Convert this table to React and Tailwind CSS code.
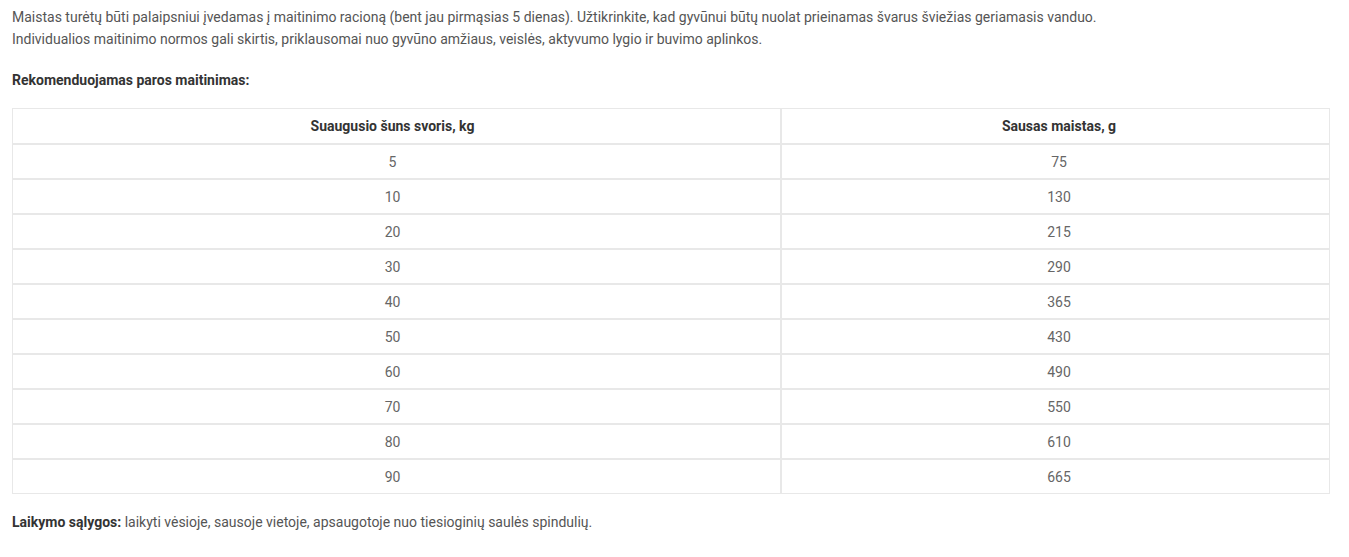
const rows = [
  ["5", "75"],
  ["10", "130"],
  ["20", "215"],
  ["30", "290"],
  ["40", "365"],
  ["50", "430"],
  ["60", "490"],
  ["70", "550"],
  ["80", "610"],
  ["90", "665"],
];

export default function App() {
  return (
    <div className="bg-white px-3 pt-[6px] pb-6 font-['Roboto',sans-serif] text-[14px] leading-[22px] text-[#555]">
      <p>
        Maistas turėtų būti palaipsniui įvedamas į maitinimo racioną (bent jau pirmąsias 5 dienas). Užtikrinkite, kad gyvūnui būtų nuolat prieinamas švarus šviežias geriamasis vanduo.
        <br />
        Individualios maitinimo normos gali skirtis, priklausomai nuo gyvūno amžiaus, veislės, aktyvumo lygio ir buvimo aplinkos.
      </p>
      <p className="mt-[19px] font-bold text-[#333]">Rekomenduojamas paros maitinimas:</p>
      <table className="mt-[17px] w-[1318px] border-separate border-spacing-0">
        <thead>
          <tr>
            <th className="h-[36px] w-[769px] border border-[#e8e8e8] py-0 pl-0 pr-2 text-center font-bold text-[#333]">
              Suaugusio šuns svoris, kg
            </th>
            <th className="h-[36px] border border-[#e8e8e8] py-0 pl-[7px] pr-0 text-center font-bold text-[#333]">
              Sausas maistas, g
            </th>
          </tr>
        </thead>
        <tbody>
          {rows.map(([weight, food]) => (
            <tr key={weight}>
              <td className="h-[35px] border border-[#e8e8e8] py-0 pl-0 pr-2 text-center text-[#666]">{weight}</td>
              <td className="h-[35px] border border-[#e8e8e8] py-0 pl-[7px] pr-0 text-center text-[#666]">{food}</td>
            </tr>
          ))}
        </tbody>
      </table>
      <p className="mt-[17px]">
        <strong className="font-bold text-[#333]">Laikymo sąlygos:</strong> laikyti vėsioje, sausoje vietoje, apsaugotoje nuo tiesioginių saulės spindulių.
      </p>
    </div>
  );
}
